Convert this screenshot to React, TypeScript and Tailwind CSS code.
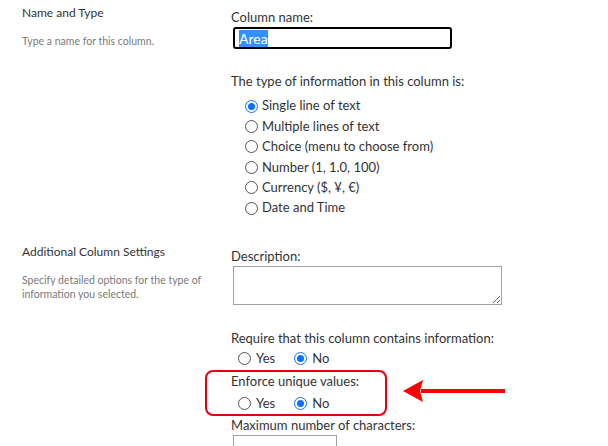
import React from 'react';

const FONT = "font-['Lato',_'Liberation_Sans',_sans-serif]";

function Radio({ checked }: { checked?: boolean }) {
  if (checked) {
    return (
      <span className="flex h-[13px] w-[13px] shrink-0 items-center justify-center rounded-full border border-[#0f6fff] bg-white">
        <span className="h-[7px] w-[7px] rounded-full bg-[#0f6fff]" />
      </span>
    );
  }
  return (
    <span className="h-[13px] w-[13px] shrink-0 rounded-full border border-[#555] bg-white" />
  );
}

function TypeOption({ label, checked }: { label: string; checked?: boolean }) {
  return (
    <div className="flex h-[20.4px] items-center gap-[4px] pl-[14px]">
      <Radio checked={checked} />
      <span>{label}</span>
    </div>
  );
}

function YesNo() {
  return (
    <div className="flex h-[20px] items-center pl-[7px]">
      <Radio />
      <span className="ml-[5px]">Yes</span>
      <span className="ml-[19px]">
        <Radio checked />
      </span>
      <span className="ml-[5px]">No</span>
    </div>
  );
}

function SectionInfo({ title, text }: { title: string; text: string }) {
  return (
    <div className="w-[231px] shrink-0 pl-[22px] pr-[20px]">
      <div className="text-[12px] leading-[18px] text-[#333]">{title}</div>
      <p className="mt-[12px] text-[10.5px] leading-[14px] text-[#7a7a7a]">{text}</p>
    </div>
  );
}

export default function App() {
  const types = [
    'Single line of text',
    'Multiple lines of text',
    'Choice (menu to choose from)',
    'Number (1, 1.0, 100)',
    'Currency ($, ¥, €)',
    'Date and Time',
  ];

  return (
    <div className={`h-[446px] w-[608px] overflow-hidden bg-white text-[13px] text-[#333] ${FONT}`}>
      {/* name and type */}
      <div className="flex pt-[4px]">
        <SectionInfo title="Name and Type" text="Type a name for this column." />
        <div className="pt-[3px]">
          <div className="leading-[20px]">Column name:</div>
          <div className="ml-[2px] flex h-[22px] w-[219px] items-center rounded-[3px] border-2 border-black px-[4px]">
            <span className="bg-[#3390ff] text-[14px] leading-[17px] text-white">Area</span>
          </div>
          <div className="mt-[22px] leading-[20px]">The type of information in this column is:</div>
          <div className="mt-[5px]">
            {types.map((t, i) => (
              <TypeOption key={t} label={t} checked={i === 0} />
            ))}
          </div>
        </div>
      </div>

      {/* additional settings */}
      <div className="mt-[25px] flex">
        <SectionInfo
          title="Additional Column Settings"
          text="Specify detailed options for the type of information you selected."
        />
        <div className="pt-[3px]">
          <div className="leading-[20px]">Description:</div>
          <textarea
            className="ml-[2px] block h-[39px] w-[269px] border border-[#a0a0a0] bg-white outline-none"
            defaultValue=""
          />
          <div className="mt-[23px] leading-[20px]">Require that this column contains information:</div>
          <YesNo />

          <div className="relative mt-[3px]">
            <div className="leading-[20px]">Enforce unique values:</div>
            <div className="mt-[2px]">
              <YesNo />
            </div>
            <div className="pointer-events-none absolute -left-[26px] -top-[1px] h-[46px] w-[182px] rounded-[8px] border-2 border-[#e3000f]" />
            <svg
              className="absolute left-[170px] top-[7px]"
              width="106"
              height="26"
              viewBox="0 0 106 26"
            >
              <path d="M20 11 L104 11 L104 15 L20 15 Z" fill="#ff0000" />
              <path d="M2 13 L22 2 L19 13 L22 24 Z" fill="#ff0000" />
            </svg>
          </div>

          <div className="mt-[2px] leading-[20px]">Maximum number of characters:</div>
          <div className="ml-[2px] h-[22px] w-[104px] border border-[#a0a0a0]" />
        </div>
      </div>
    </div>
  );
}
